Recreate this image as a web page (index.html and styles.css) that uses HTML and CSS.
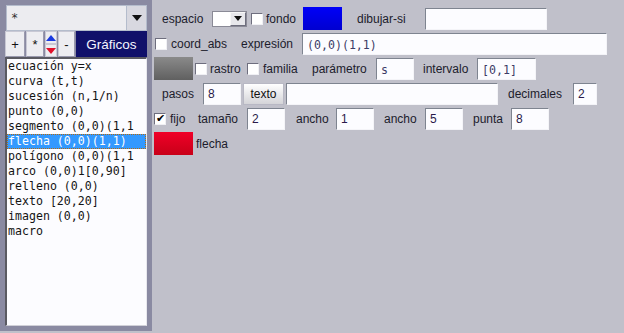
FILE: index.html
```html
<!DOCTYPE html>
<html>
<head>
<meta charset="utf-8">
<link rel="stylesheet" href="styles.css">
</head>
<body>
<div class="app">
  <div class="left">
    <div class="combo">
      <div class="combo-text">*</div>
      <div class="combo-btn"><svg width="10" height="6" viewBox="0 0 10 6"><path d="M0 0H10L5 6Z" fill="#111"/></svg></div>
    </div>
    <div class="tools">
      <div class="tbtn b-plus">+</div>
      <div class="tbtn b-star">*</div>
      <div class="spin">
        <div class="spin-half"><svg width="10" height="6" viewBox="0 0 10 6"><path d="M0 6H10L5 0Z" fill="#1a3ae0"/></svg></div>
        <div class="spin-half"><svg width="10" height="6" viewBox="0 0 10 6"><path d="M0 0H10L5 6Z" fill="#e0102a"/></svg></div>
      </div>
      <div class="tbtn b-minus">-</div>
      <div class="graf">Gráficos</div>
    </div>
    <div class="list">
      <div class="item">ecuación y=x</div>
      <div class="item">curva (t,t)</div>
      <div class="item">sucesión (n,1/n)</div>
      <div class="item">punto (0,0)</div>
      <div class="item">segmento (0,0)(1,1</div>
      <div class="item sel">flecha (0,0)(1,1)</div>
      <div class="item">polígono (0,0)(1,1</div>
      <div class="item">arco (0,0)1[0,90]</div>
      <div class="item">relleno (0,0)</div>
      <div class="item">texto [20,20]</div>
      <div class="item">imagen (0,0)</div>
      <div class="item">macro</div>
    </div>
  </div>
  <div class="right">
    <div class="row">
      <span class="lbl w-espacio">espacio</span>
      <div class="mini-combo"><div class="mc-text"></div><div class="mc-btn"><svg width="8" height="5" viewBox="0 0 8 5"><path d="M0 0H8L4 5Z" fill="#111"/></svg></div></div>
      <span class="chk c-fondo"></span>
      <span class="lbl w-fondo">fondo</span>
      <div class="swatch blue"></div>
      <span class="lbl w-dibujar">dibujar-si</span>
      <div class="field f-dibujar"></div>
    </div>
    <div class="row">
      <span class="chk c-coord"></span>
      <span class="lbl w-coord">coord_abs</span>
      <span class="lbl w-expr">expresión</span>
      <div class="field f-expr mono">(0,0)(1,1)</div>
    </div>
    <div class="row">
      <div class="swatch grey"></div>
      <span class="chk c-rastro"></span>
      <span class="lbl w-rastro">rastro</span>
      <span class="chk c-familia"></span>
      <span class="lbl w-familia">familia</span>
      <span class="lbl w-param">parámetro</span>
      <div class="field f-param mono">s</div>
      <span class="lbl w-interv">intervalo</span>
      <div class="field f-interv mono">[0,1]</div>
    </div>
    <div class="row">
      <span class="lbl w-pasos">pasos</span>
      <div class="field f-pasos">8</div>
      <div class="btn-texto">texto</div>
      <div class="field f-texto"></div>
      <span class="lbl w-dec">decimales</span>
      <div class="field f-dec">2</div>
    </div>
    <div class="row">
      <span class="chk checked c-fijo">✔</span>
      <span class="lbl w-fijo">fijo</span>
      <span class="lbl w-tam">tamaño</span>
      <div class="field f-small f-tam">2</div>
      <span class="lbl w-ancho1">ancho</span>
      <div class="field f-small f-ancho1">1</div>
      <span class="lbl w-ancho2">ancho</span>
      <div class="field f-small f-ancho2">5</div>
      <span class="lbl w-punta">punta</span>
      <div class="field f-small f-punta">8</div>
    </div>
    <div class="row">
      <div class="swatch red"></div>
      <span class="lbl w-flecha">flecha</span>
    </div>
  </div>
</div>
</body>
</html>
```
FILE: styles.css
```css
* { box-sizing: border-box; }
html, body { margin: 0; padding: 0; }
body {
  width: 624px;
  height: 333px;
  background: #c0c0ca;
  font-family: "Liberation Sans", Arial, sans-serif;
  font-size: 12px;
  color: #1c1c2c;
  overflow: hidden;
}
.app { display: flex; height: 331px; }
.left {
  width: 152px;
  background: #8a8aa2;
  padding: 5px 5px 5px 5px;
  display: flex;
  flex-direction: column;
}
.combo {
  display: flex;
  height: 26px;
  margin-left: 1px;
  width: 141px;
}
.combo-text {
  flex: 1;
  background: #ececf0;
  border: 1px solid #b4bccc;
  font-family: "DejaVu Sans Mono", monospace;
  font-size: 12px;
  padding: 5px 0 0 4px;
  color: #333;
}
.combo-btn {
  width: 20px;
  background: #d8d8e0;
  border: 1px solid #b4bccc;
  border-left: none;
  display: flex;
  align-items: center;
  justify-content: center;
}
.tools { display: flex; height: 26px; }
.tbtn {
  background: #ededf1;
  border: 1px solid #c8c8d4;
  border-right-color: #9a9aae;
  border-bottom-color: #9a9aae;
  display: flex;
  align-items: center;
  justify-content: center;
  font-size: 13px;
  color: #111;
}
.b-plus { width: 20px; margin-right: 1px; }
.b-star { width: 18px; margin-right: 1px; }
.b-minus { width: 17px; margin-left: 1px; margin-right: 1px; }
.spin { width: 12px; display: flex; flex-direction: column; }
.spin-half {
  flex: 1;
  background: #ededf1;
  border: 1px solid #c8c8d4;
  display: flex;
  align-items: center;
  justify-content: center;
}
.graf {
  width: 71px;
  background: #10106a;
  color: #f4f4ff;
  font-size: 13.5px;
  display: flex;
  align-items: center;
  justify-content: center;
}
.list {
  flex: 1;
  margin-top: 0;
  width: 142px;
  background: #fcfcff;
  border-style: solid;
  border-width: 2px 1px 1px 2px;
  border-color: #5a5a62 #e8e8ee #d0d0d8 #5a5a62;
  font-family: "DejaVu Sans Mono", monospace;
  font-size: 11.6px;
  color: #141414;
  overflow: hidden;
}
.item {
  height: 15px;
  line-height: 15px;
  padding-left: 1px;
  white-space: nowrap;
  overflow: hidden;
}
.item.sel {
  background: #3399ff;
  color: #fff;
  outline: 1px dotted #b46a10;
  outline-offset: -1px;
}
.right {
  flex: 1;
  padding-top: 7px;
  display: flex;
  flex-direction: column;
  gap: 2px;
}
.row {
  height: 23px;
  display: flex;
  align-items: center;
}
.lbl { display: inline-block; white-space: nowrap; }
.chk {
  width: 12px;
  height: 12px;
  background: #fff;
  border: 1px solid;
  border-color: #6e6e7e #f0f0f4 #f0f0f4 #6e6e7e;
  display: inline-flex;
  align-items: center;
  justify-content: center;
  font-size: 11px;
  line-height: 1;
  color: #000;
}
.field {
  height: 22px;
  background: #fcfcff;
  border: 1px solid;
  border-color: #7e8490 #f4f4f8 #f4f4f8 #7e8490;
  padding: 3px 0 0 4px;
  font-size: 12px;
  color: #2a1a4a;
  white-space: nowrap;
}
.mono {
  font-family: "DejaVu Sans Mono", monospace;
  font-size: 11.6px;
  color: #3c3c66;
  padding-top: 4px;
}
.swatch { height: 23px; width: 39px; }
.blue { background: linear-gradient(#0000f8, #0000d0); }
.grey { background: linear-gradient(#8a8a8a, #606060); }
.red { background: linear-gradient(#f00028, #c80018); }
.mini-combo {
  display: flex;
  width: 35px;
  height: 16px;
  border: 1px solid #8a8a96;
  margin-left: 8px;
  background: #fff;
}
.mc-text { flex: 1; }
.mc-btn {
  width: 16px;
  border: 1px solid;
  border-color: #f8f8f8 #6e6e7e #6e6e7e #f8f8f8;
  background: #e8e8ec;
  display: flex;
  align-items: center;
  justify-content: center;
}
/* row 1 */
.w-espacio { margin-left: 10px; width: 42px; }
.c-fondo { margin-left: 4px; }
.w-fondo { margin-left: 3px; width: 34px; }
.blue { margin-left: 3px; }
.w-dibujar { margin-left: 15px; width: 60px; }
.f-dibujar { margin-left: 8px; width: 122px; }
/* row 2 */
.c-coord { margin-left: 3px; }
.w-coord { margin-left: 4px; width: 57px; }
.w-expr { margin-left: 13px; width: 55px; }
.f-expr { margin-left: 6px; width: 305px; }
/* row 3 */
.grey { margin-left: 2px; }
.c-rastro { margin-left: 2px; }
.w-rastro { margin-left: 3px; width: 32px; }
.c-familia { margin-left: 5px; }
.w-familia { margin-left: 4px; width: 37px; }
.w-param { margin-left: 12px; width: 56px; }
.f-param { margin-left: 8px; width: 38px; }
.w-interv { margin-left: 9px; width: 47px; }
.f-interv { margin-left: 7px; width: 59px; }
/* row 4 */
.w-pasos { margin-left: 10px; width: 33px; }
.f-pasos { margin-left: 8px; width: 38px; }
.btn-texto {
  margin-left: 2px;
  width: 41px;
  height: 22px;
  background: linear-gradient(#ffffff, #d4d4d8);
  border: 1px solid #b8b8c4;
  display: flex;
  align-items: center;
  justify-content: center;
  color: #111;
}
.f-texto { margin-left: 2px; width: 212px; }
.w-dec { margin-left: 10px; width: 57px; }
.f-dec { margin-left: 8px; width: 24px; }
/* row 5 */
.c-fijo { margin-left: 2px; }
.w-fijo { margin-left: 4px; width: 15px; }
.w-tam { margin-left: 13px; width: 41px; }
.f-small { width: 38px; }
.f-tam { margin-left: 8px; }
.w-ancho1 { margin-left: 11px; width: 32px; }
.f-ancho1 { margin-left: 8px; }
.w-ancho2 { margin-left: 10px; width: 33px; }
.f-ancho2 { margin-left: 8px; }
.w-punta { margin-left: 10px; width: 30px; }
.f-punta { margin-left: 8px; }
/* row 6 */
.red { margin-left: 2px; }
.w-flecha { margin-left: 3px; }
```
